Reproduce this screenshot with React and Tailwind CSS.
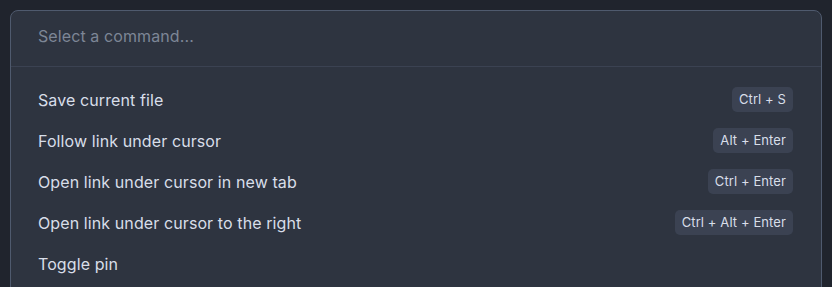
const commands = [
  { name: 'Save current file', keys: 'Ctrl + S' },
  { name: 'Follow link under cursor', keys: 'Alt + Enter' },
  { name: 'Open link under cursor in new tab', keys: 'Ctrl + Enter' },
  { name: 'Open link under cursor to the right', keys: 'Ctrl + Alt + Enter' },
  { name: 'Toggle pin', keys: '' },
];

export default function App() {
  return (
    <div
      className="h-[287px] overflow-hidden bg-[#20242d] px-[10px] pt-[10px]"
      style={{ fontFamily: 'Inter, "Noto Sans", sans-serif' }}
    >
      <div className="h-[400px] rounded-lg border border-[#4f5a6e] bg-[#2e3440]">
        <div className="h-[56px] border-b border-[#3b4252] px-[27px] pt-[13px]">
          <span className="text-[16px] leading-[20px] tracking-[0.1px] text-[#7d8696]">
            Select a command...
          </span>
        </div>
        <ul className="pt-[12px]">
          {commands.map((c) => (
            <li
              key={c.name}
              className="flex h-[41px] items-center justify-between pl-[27px] pr-[28px]"
            >
              <span className="text-[16px] tracking-[0.1px] text-[#d8dee9]">{c.name}</span>
              {c.keys && (
                <span className="rounded-[5px] bg-[#3b4252] px-[7px] py-[4px] text-[13px] leading-[17px] tracking-[0.1px] text-[#d8dee9]">
                  {c.keys}
                </span>
              )}
            </li>
          ))}
        </ul>
      </div>
    </div>
  );
}
